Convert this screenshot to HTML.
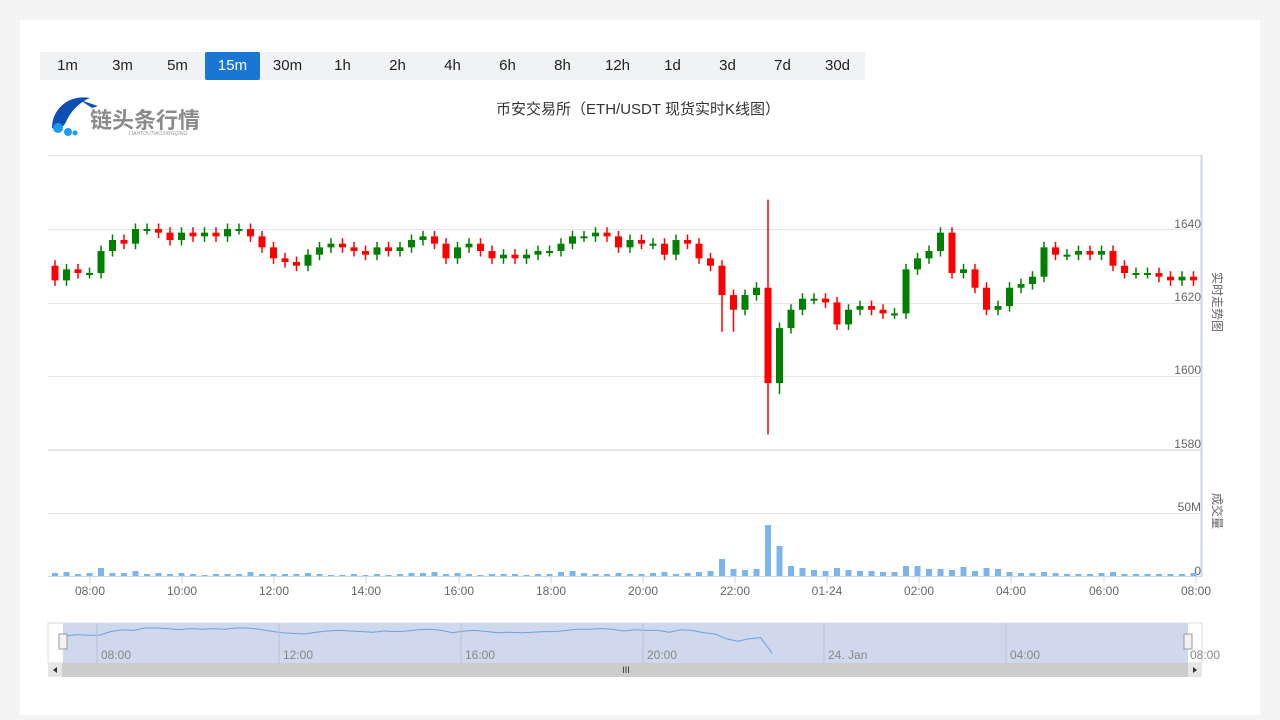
<!DOCTYPE html>
<html><head><meta charset="utf-8"><style>
body{margin:0;background:#f4f4f4;font-family:"Liberation Sans","Noto Sans CJK SC",sans-serif;}
#card{position:absolute;left:20px;top:20px;width:1240px;height:695px;background:#fff;}
#tabs{position:absolute;left:40px;top:52px;height:28px;display:flex;background:#f1f2f4;}
#tabs div{width:55px;height:28px;line-height:28px;text-align:center;font-size:15px;color:#222;}
#tabs div.a{background:#1976d2;color:#fff;border-radius:2px;}
svg text{font-family:"Liberation Sans","Noto Sans CJK SC",sans-serif;}
</style></head><body>
<div id="card"></div>
<div id="tabs"><div>1m</div><div>3m</div><div>5m</div><div class="a">15m</div><div>30m</div><div>1h</div><div>2h</div><div>4h</div><div>6h</div><div>8h</div><div>12h</div><div>1d</div><div>3d</div><div>7d</div><div>30d</div></div>
<svg id="s" width="1280" height="720" style="position:absolute;left:0;top:0">
<path d="M52 128 C52 108 70 94 90 98 C84 100 72 108 66 122 C63 128 58 130 52 128Z" fill="#0d4fb3"/>
<path d="M80 100 L98 106 L92 108Z" fill="#0d4fb3"/>
<circle cx="58" cy="128" r="5" fill="#1a9cf0"/><circle cx="68" cy="132" r="4" fill="#1a9cf0"/><circle cx="75" cy="133" r="2.5" fill="#1a9cf0"/>
<text x="90" y="128" font-size="22" font-weight="bold" fill="#8a8a8a">链头条行情</text>
<text x="129" y="135" font-size="5" fill="#999" font-style="italic">LIANTOUTIAOXINGQING</text>
<text x="638" y="114" font-size="15" fill="#333" text-anchor="middle">币安交易所（ETH/USDT 现货实时K线图）</text>
<g stroke="#e6e6e6" stroke-width="1">
<line x1="48" x2="1201" y1="155.5" y2="155.5"/><line x1="48" x2="1201" y1="229.5" y2="229.5"/><line x1="48" x2="1201" y1="303.5" y2="303.5"/><line x1="48" x2="1201" y1="376.5" y2="376.5"/><line x1="48" x2="1201" y1="450" y2="450" stroke-width="2"/><line x1="48" x2="1201" y1="513.5" y2="513.5"/>
</g>
<line x1="1201.5" x2="1201.5" y1="155" y2="577" stroke="#ccd6eb" stroke-width="2"/>
<line x1="48" x2="1201" y1="576.5" y2="576.5" stroke="#ccd6eb"/>
<g font-size="12" fill="#666" text-anchor="end">
<text x="1201" y="228">1640</text><text x="1201" y="301">1620</text><text x="1201" y="374">1600</text><text x="1201" y="448">1580</text><text x="1201" y="511">50M</text><text x="1201" y="575">0</text>
</g>
<text font-size="12" fill="#666" transform="translate(1213,272) rotate(90)">实时走势图</text>
<text font-size="12" fill="#666" transform="translate(1213,493) rotate(90)">成交量</text>
<g id="c"></g>
<g font-size="12" fill="#666" text-anchor="middle" id="xa"></g>
<rect x="48" y="623" width="1154" height="40" fill="#fff" stroke="#ddd"/>
<rect x="63" y="623" width="1125" height="40" fill="#cfd8ec"/>
<g id="nav"></g>
<rect x="48" y="663" width="1154" height="14" fill="#ccc"/>
<rect x="48" y="663" width="14" height="14" fill="#e6e6e6"/><rect x="1188" y="663" width="14" height="14" fill="#e6e6e6"/>
<path d="M53 670 L57 667 L57 673Z" fill="#333"/><path d="M1197 670 L1193 667 L1193 673Z" fill="#333"/>
<rect x="59" y="634" width="8" height="15" fill="#f2f2f2" stroke="#999"/><rect x="1184" y="634" width="8" height="15" fill="#f2f2f2" stroke="#999"/>
<text x="626" y="673" font-size="9" fill="#333" text-anchor="middle">III</text>
</svg>
<script>
var C=[1626,1629,1628,1628,1634,1637,1636,1640,1640,1639,1637,1639,1638,1639,1638,1640,1640,1638,1635,1632,1631,1630,1633,1635,1636,1635,1634,1633,1635,1634,1635,1637,1638,1636,1632,1635,1636,1634,1632,1633,1632,1633,1634,1634,1636,1638,1638,1639,1638,1635,1637,1636,1636,1633,1637,1636,1632,1630,1622,1618,1622,1624,1598,1613,1618,1621,1621,1620,1614,1618,1619,1618,1617,1617,1629,1632,1634,1639,1628,1629,1624,1618,1619,1624,1625,1627,1635,1633,1633,1634,1633,1634,1630,1628,1628,1628,1627,1626,1627,1626];
var V=[3,4,2,3,8,3,3,5,2,3,2,3,2,1,2,2,2,4,2,2,2,2,3,2,1,1,2,1,2,1,2,3,3,4,2,3,2,1,2,2,2,1,2,2,4,5,3,2,2,3,2,2,3,4,2,3,4,5,17,7,6,7,51,30,10,8,6,5,8,6,5,5,4,4,10,10,7,7,6,9,5,8,7,4,3,3,4,3,2,2,2,3,4,2,2,2,2,2,2,3];
function y(p){return 229+(1640-p)*3.67}
var n=C.length,h='',st=11.5;
for(var i=0;i<n;i++){var x=55+i*st,o=i?C[i-1]:1630,c=C[i];var hi=Math.max(o,c)+1.5,lo=Math.min(o,c)-1.5;
if(i==62){hi=1648;lo=1584;} if(i==58||i==59)lo=1612; if(i==63)lo=1595;
var col=c<o?'#f00':'#008000';var t=y(Math.max(o,c)),b=y(Math.min(o,c));if(b-t<2)b=t+2;
h+='<line x1="'+x+'" x2="'+x+'" y1="'+y(hi)+'" y2="'+y(lo)+'" stroke="'+col+'" stroke-width="1.5"/>';
h+='<rect x="'+(x-3.5)+'" y="'+t+'" width="7" height="'+(b-t)+'" fill="'+col+'"/>';
var v=V[i]||2;h+='<rect x="'+(x-3)+'" y="'+(576-v)+'" width="6" height="'+v+'" fill="#7cb5ec"/>';
}
document.getElementById('c').innerHTML=h;
var L=[[90,'08:00'],[182,'10:00'],[274,'12:00'],[366,'14:00'],[459,'16:00'],[551,'18:00'],[643,'20:00'],[735,'22:00'],[827,'01-24'],[919,'02:00'],[1011,'04:00'],[1104,'06:00'],[1196,'08:00']];
var a='';L.forEach(function(l){a+='<line x1="'+l[0]+'" x2="'+l[0]+'" y1="577" y2="583" stroke="#ccd6eb"/><text x="'+l[0]+'" y="595">'+l[1]+'</text>';});
document.getElementById('xa').innerHTML=a;
var p='';for(var i=0;i<=62;i++){var x=65+i*(772-65)/62;p+=(i?'L':'M')+x+' '+(628+(1640-C[i])*0.6);}
var g='<path d="'+p+'" fill="none" stroke="#6f9fe0" stroke-width="1"/>';
[[97,'08:00'],[279,'12:00'],[461,'16:00'],[643,'20:00'],[824,'24. Jan'],[1006,'04:00']].forEach(function(l){g+='<line x1="'+l[0]+'" x2="'+l[0]+'" y1="623" y2="663" stroke="#b8c2d8"/><text x="'+(l[0]+4)+'" y="659" font-size="12" fill="#888">'+l[1]+'</text>';});
g+='<text x="1190" y="659" font-size="12" fill="#888">08:00</text>';
document.getElementById('nav').innerHTML=g;
</script>
</body></html>
